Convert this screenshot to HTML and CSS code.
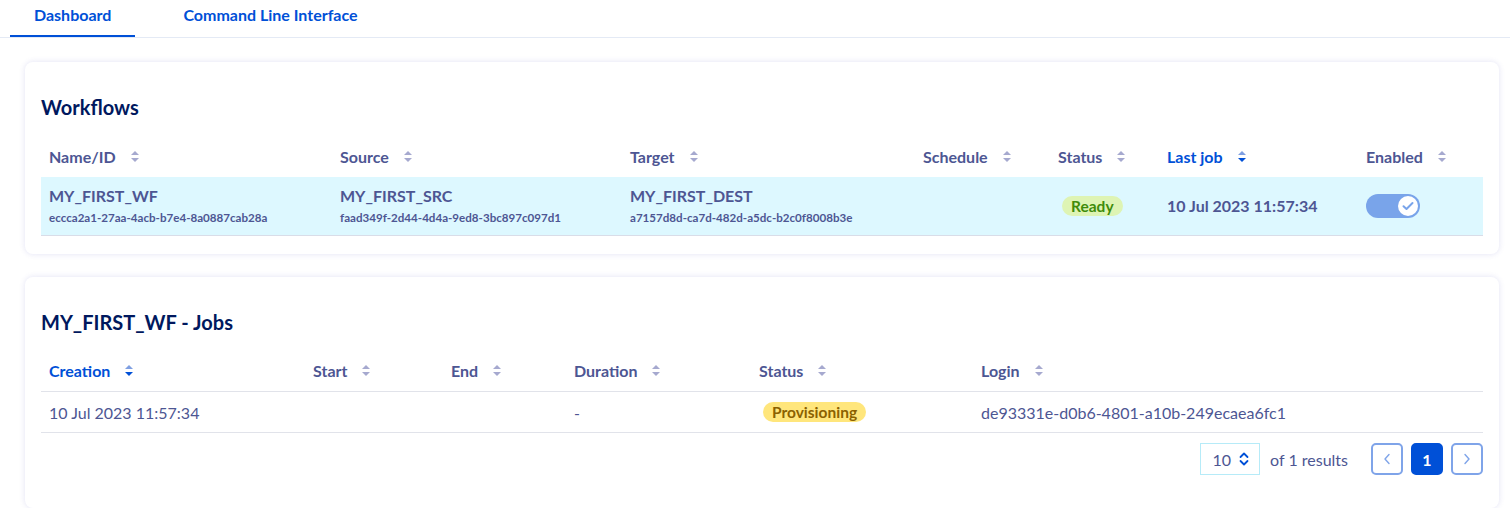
FILE: index.html
```html
<!DOCTYPE html>
<html>
<head>
<meta charset="utf-8">
<link rel="stylesheet" href="styles.css">
</head>
<body>
<nav class="tabs">
  <a class="tab active">Dashboard</a>
  <a class="tab">Command Line Interface</a>
</nav>
<main class="main">
  <section class="card">
    <h2 class="title">Workflows</h2>
    <table class="table wf">
      <colgroup><col style="width:291px"><col style="width:290px"><col style="width:293px"><col style="width:135px"><col style="width:109px"><col style="width:199px"><col></colgroup>
      <thead>
        <tr>
          <th><span class="th">Name/ID<i class="sort"></i></span></th>
          <th><span class="th">Source<i class="sort"></i></span></th>
          <th><span class="th">Target<i class="sort"></i></span></th>
          <th><span class="th">Schedule<i class="sort"></i></span></th>
          <th><span class="th">Status<i class="sort"></i></span></th>
          <th><span class="th on">Last job<i class="sort on"></i></span></th>
          <th><span class="th">Enabled<i class="sort"></i></span></th>
        </tr>
      </thead>
      <tbody>
        <tr class="sel">
          <td><div class="nm">MY_FIRST_WF</div><div class="id">eccca2a1-27aa-4acb-b7e4-8a0887cab28a</div></td>
          <td><div class="nm">MY_FIRST_SRC</div><div class="id">faad349f-2d44-4d4a-9ed8-3bc897c097d1</div></td>
          <td><div class="nm">MY_FIRST_DEST</div><div class="id">a7157d8d-ca7d-482d-a5dc-b2c0f8008b3e</div></td>
          <td></td>
          <td><span class="badge ready">Ready</span></td>
          <td class="bold">10 Jul 2023 11:57:34</td>
          <td><span class="toggle"><span class="knob"><svg width="12" height="10" viewBox="0 0 12 10"><path d="M1.5 5.2 L4.5 8 L10.5 2" fill="none" stroke="#79a4ea" stroke-width="2" stroke-linecap="round" stroke-linejoin="round"/></svg></span></span></td>
        </tr>
      </tbody>
    </table>
  </section>
  <section class="card">
    <h2 class="title">MY_FIRST_WF - Jobs</h2>
    <table class="table jobs">
      <colgroup><col style="width:264px"><col style="width:138px"><col style="width:123px"><col style="width:185px"><col style="width:222px"><col></colgroup>
      <thead>
        <tr>
          <th><span class="th on">Creation<i class="sort on"></i></span></th>
          <th><span class="th">Start<i class="sort"></i></span></th>
          <th><span class="th">End<i class="sort"></i></span></th>
          <th><span class="th">Duration<i class="sort"></i></span></th>
          <th><span class="th">Status<i class="sort"></i></span></th>
          <th><span class="th">Login<i class="sort"></i></span></th>
        </tr>
      </thead>
      <tbody>
        <tr>
          <td>10 Jul 2023 11:57:34</td>
          <td></td>
          <td></td>
          <td>-</td>
          <td><span class="badge prov">Provisioning</span></td>
          <td>de93331e-d0b6-4801-a10b-249ecaea6fc1</td>
        </tr>
      </tbody>
    </table>
    <div class="pager">
      <div class="select">10<svg width="10" height="14" viewBox="0 0 10 14"><path d="M1.5 5 L5 1.5 L8.5 5 M1.5 9 L5 12.5 L8.5 9" fill="none" stroke="#0050d7" stroke-width="1.8" stroke-linecap="round" stroke-linejoin="round"/></svg></div>
      <span class="results">of 1 results</span>
      <div class="pages">
        <button class="pbtn"><svg width="8" height="12" viewBox="0 0 8 12"><path d="M6 1.5 L2 6 L6 10.5" fill="none" stroke="#7fa4e9" stroke-width="1.4" stroke-linecap="round" stroke-linejoin="round"/></svg></button>
        <button class="pbtn cur">1</button>
        <button class="pbtn"><svg width="8" height="12" viewBox="0 0 8 12"><path d="M2 1.5 L6 6 L2 10.5" fill="none" stroke="#7fa4e9" stroke-width="1.4" stroke-linecap="round" stroke-linejoin="round"/></svg></button>
      </div>
    </div>
  </section>
</main>
</body>
</html>
```

FILE: styles.css
```css
* { box-sizing: border-box; }
body {
  margin: 0;
  background: #fff;
  font-family: "Lato", "Open Sans", sans-serif;
  color: #4d5693;
  font-size: 16px;
}
.tabs {
  display: flex;
  gap: 24px;
  padding-left: 10px;
  border-bottom: 1px solid #e4eaf5;
  height: 38px;
}
.tab {
  display: flex;
  align-items: center;
  height: 37px;
  padding: 0 24px 6px;
  font-weight: 700;
  font-size: 16px;
  color: #0050d7;
  border-bottom: 2px solid transparent;
}
.tab.active { border-bottom-color: #0050d7; }
.main {
  padding: 24px 11px 0 25px;
  display: flex;
  flex-direction: column;
  gap: 23px;
}
.card {
  background: #fff;
  border-radius: 8px;
  box-shadow: 0 0 5px 1px rgba(90, 90, 190, 0.13);
  padding: 30px 16px 18px;
}
.title {
  margin: 0 0 14px;
  font-size: 20px;
  line-height: 30px;
  font-weight: 700;
  color: #00185e;
}
.table {
  width: 100%;
  border-collapse: collapse;
  table-layout: fixed;
}
.table th {
  text-align: left;
  height: 41px;
  padding: 0 8px 1px;
  font-weight: 700;
  vertical-align: middle;
}
.th {
  display: inline-flex;
  align-items: center;
  color: #4d5693;
}
.th.on { color: #0050d7; }
.sort {
  display: inline-block;
  position: relative;
  width: 9px;
  height: 11px;
  margin-left: 15px;
}
.sort::before, .sort::after {
  content: "";
  position: absolute;
  left: 0;
  border-left: 4.5px solid transparent;
  border-right: 4.5px solid transparent;
}
.sort::before { top: 0; border-bottom: 4.5px solid #a6a9cf; }
.sort::after { bottom: 0; border-top: 4.5px solid #a6a9cf; }
.sort.on::before { border-bottom-color: #7f9fe2; }
.sort.on::after { border-top-color: #0050d7; }
.table td {
  padding: 0 8px;
  vertical-align: middle;
  white-space: nowrap;
}
.wf tbody tr { height: 58px; }
.wf tr.sel { background: #ddf8ff; border-bottom: 1px solid #d9dde8; }
.nm { font-weight: 700; font-size: 16px; line-height: 20px; }
.id { font-weight: 700; font-size: 11.6px; line-height: 16px; margin-top: 4px; }
.bold { font-weight: 700; }
.jobs thead tr { border-bottom: 1px solid #e1e3ea; }
.jobs tbody tr { height: 41px; border-bottom: 1px solid #e1e3ea; }
.badge {
  display: inline-block;
  height: 20px;
  line-height: 20px;
  border-radius: 10px;
  padding: 0 9px;
  font-weight: 700;
  font-size: 15.5px;
}
.ready { background: #def4b4; color: #3f8c0a; margin-left: 4px; }
.prov { background: #ffe67c; color: #8b6100; margin-left: 4px; }
.toggle {
  display: inline-flex;
  align-items: center;
  justify-content: flex-end;
  width: 54px;
  height: 24px;
  border-radius: 12px;
  background: #79a4ea;
  padding: 2px;
  vertical-align: middle;
}
.knob {
  width: 20px;
  height: 20px;
  border-radius: 50%;
  background: #fff;
  display: flex;
  align-items: center;
  justify-content: center;
}
.pager {
  display: flex;
  align-items: center;
  justify-content: flex-end;
  margin: 10px 0 15px;
}
.select {
  width: 60px;
  height: 32px;
  border: 1px solid #b6ebf8;
  display: flex;
  align-items: center;
  justify-content: flex-end;
  gap: 8px;
  padding-right: 10px;
  color: #4d5693;
}
.results { margin-left: 10px; color: #4d5693; }
.pages { display: flex; gap: 8px; margin-left: 23px; }
.pbtn {
  width: 32px;
  height: 32px;
  border: 2px solid #7fa4e9;
  border-radius: 5px;
  background: #fff;
  display: flex;
  align-items: center;
  justify-content: center;
  padding: 0;
  font-family: inherit;
  font-weight: 700;
  font-size: 16px;
}
.pbtn.cur { background: #0050d7; border-color: #0050d7; color: #fff; }
```
